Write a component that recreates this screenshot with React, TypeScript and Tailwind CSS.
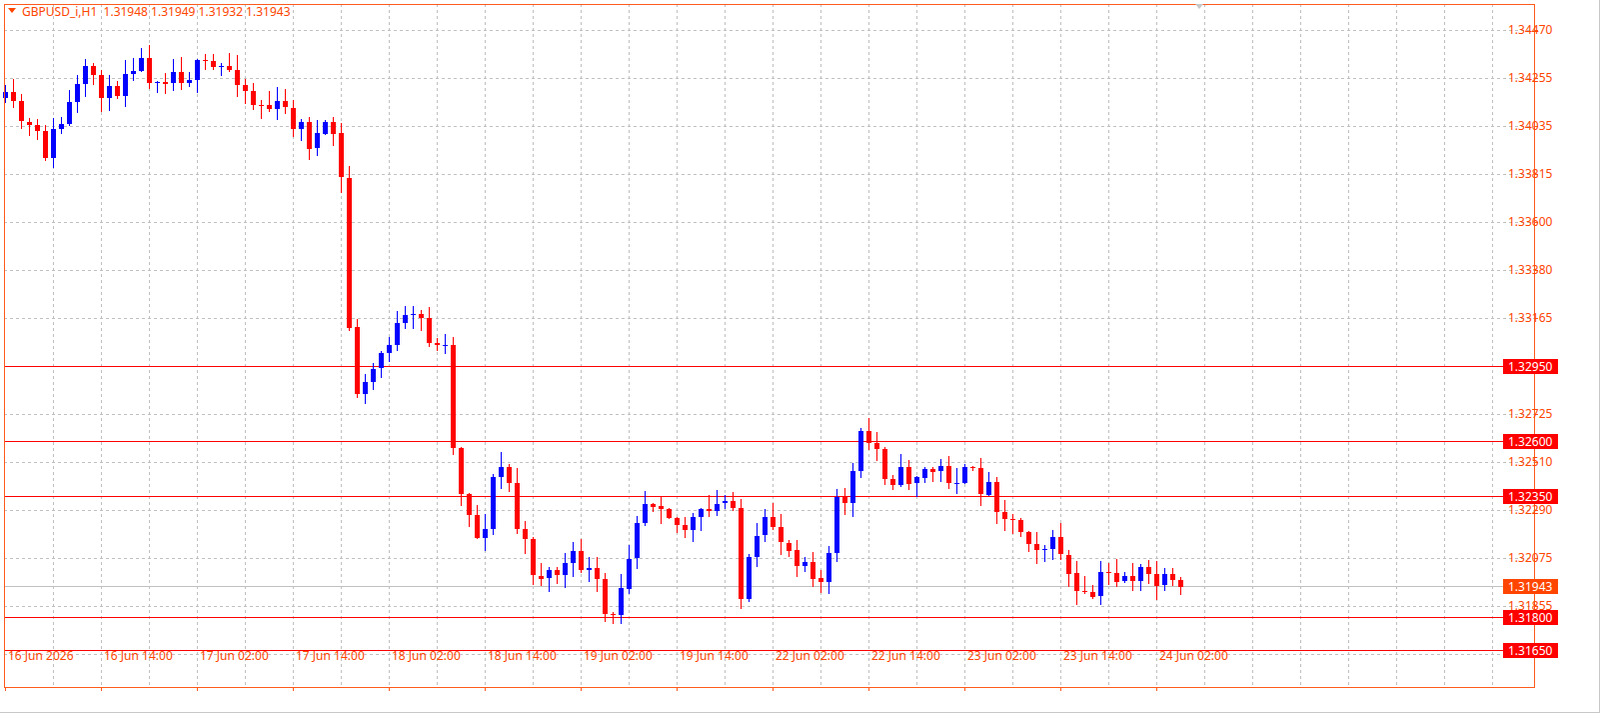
import React from "react";

const W = 1531;
const H = 683;
const pts: [number, number][] = [[5,105],[20,120],[45,150],[60,125],[75,95],[90,70],[110,100],[130,55],[150,72],[200,72],[235,68],[250,100],[290,115],[310,140],[338,130],[346,270],[352,385],[362,395],[375,365],[390,335],[410,322],[425,320],[435,355],[447,330],[454,470],[470,510],[480,550],[490,490],[505,460],[515,520],[530,565],[545,575],[560,570],[580,560],[600,595],[610,640],[620,585],[640,500],[660,495],[680,530],[700,520],[735,495],[742,615],[750,560],[770,520],[790,550],[810,560],[825,590],[835,510],[850,490],[860,440],[875,445],[885,470],[900,478],[930,470],[970,478],[990,488],[1010,520],[1030,535],[1050,550],[1060,545],[1070,580],[1080,605],[1090,600],[1105,575],[1130,575],[1150,578],[1170,590],[1181,587]];

function interp(x: number) {
  for (let i = 0; i < pts.length - 1; i++) {
    const [x0, y0] = pts[i], [x1, y1] = pts[i + 1];
    if (x >= x0 && x <= x1) return y0 + ((y1 - y0) * (x - x0)) / (x1 - x0 || 1);
  }
  return pts[pts.length - 1][1];
}
let seed = 11;
const rnd = () => { seed = (seed * 16807) % 2147483647; return seed / 2147483647; };

const candles: { x: number; o: number; c: number; h: number; l: number }[] = [];
let prev = 100;
for (let i = 0; i <= 147; i++) {
  const x = 5 + 8 * i;
  const c = i === 147 ? 587 : interp(x) + (rnd() - 0.5) * 26;
  const o = i === 0 ? 98 : prev;
  const h = Math.min(o, c) - rnd() * 14 - 1;
  const l = Math.max(o, c) + rnd() * 14 + 1;
  candles.push({ x, o, c, h, l });
  prev = c;
}

const priceLabels = [
  [30, "1.34470"],[78, "1.34255"],[126, "1.34035"],[174, "1.33815"],[222, "1.33600"],[270, "1.33380"],[318, "1.33165"],[414, "1.32725"],[462, "1.32510"],[510, "1.32290"],[558, "1.32075"],[606, "1.31855"],
] as const;
const hLines = [
  [366, "1.32950"],[441, "1.32600"],[496, "1.32350"],[617, "1.31800"],[650, "1.31650"],
] as const;
const timeLabels = ["16 Jun 2026","16 Jun 14:00","17 Jun 02:00","17 Jun 14:00","18 Jun 02:00","18 Jun 14:00","19 Jun 02:00","19 Jun 14:00","22 Jun 02:00","22 Jun 14:00","23 Jun 02:00","23 Jun 14:00","24 Jun 02:00"];

export default function App() {
  const vx: number[] = [];
  for (let x = 5 + 48; x < 1535; x += 48) vx.push(x);
  const hy: number[] = [];
  for (let y = 30; y < 687; y += 48) hy.push(y);
  return (
    <div className="relative w-[1601px] h-[713px] bg-white overflow-hidden border-r border-b border-[#c8c8c8] font-['Tahoma','DejaVu_Sans',sans-serif]">
      <svg className="absolute left-0 top-0" width={1601} height={713}>
        {vx.map((x) => (
          <line key={"v" + x} x1={x + 0.5} y1={4} x2={x + 0.5} y2={687} stroke="#c0c0c0" strokeDasharray="3 3" />
        ))}
        {hy.map((y) => (
          <line key={"h" + y} x1={4} y1={y + 0.5} x2={1535} y2={y + 0.5} stroke="#c0c0c0" strokeDasharray="3 3" />
        ))}
        {hLines.map(([y]) => (
          <line key={"r" + y} x1={4} y1={y + 0.5} x2={1535} y2={y + 0.5} stroke="#ff0000" />
        ))}
        <line x1={4} y1={586.5} x2={1535} y2={586.5} stroke="#c0c0c0" />
        {candles.map((k, i) => {
          const bull = k.c < k.o;
          const col = bull ? "#0000ff" : "#ff0000";
          const top = Math.round(Math.min(k.o, k.c));
          const bh = Math.max(1, Math.round(Math.abs(k.o - k.c)));
          return (
            <g key={i}>
              <line x1={k.x + 0.5} y1={Math.round(k.h)} x2={k.x + 0.5} y2={Math.round(k.l)} stroke={col} />
              <rect x={k.x - 2} y={top} width={5} height={bh} fill={col} />
            </g>
          );
        })}
        <rect x={4.5} y={4.5} width={W} height={H} fill="none" stroke="#ff5a1e" />
        {hy.map((y) => (
          <line key={"t" + y} x1={1535} y1={y + 0.5} x2={1539} y2={y + 0.5} stroke="#ff5a1e" />
        ))}
        {timeLabels.map((_, i) => (
          <line key={"b" + i} x1={5 + 96 * i + 0.5} y1={687} x2={5 + 96 * i + 0.5} y2={691} stroke="#ff5a1e" />
        ))}
        <path d="M1196 4 L1204 4 L1200 9 Z" fill="#c8c8c8" />
        <path d="M8 8 L16 8 L12 13 Z" fill="#ff4500" />
      </svg>
      <div className="absolute left-[22px] top-[5px] text-[12px] leading-[14px] text-[#ff4500] whitespace-pre">GBPUSD_i,H1  1.31948 1.31949 1.31932 1.31943</div>
      {priceLabels.map(([y, t]) => (
        <div key={t} className="absolute left-[1509px] text-[12px] leading-[14px] text-[#ff4500]" style={{ top: y - 7 }}>{t}</div>
      ))}
      {hLines.map(([y, t]) => (
        <div key={t} className="absolute left-[1504px] w-[55px] h-[15px] bg-[#ff0000] text-white text-[12px] leading-[15px] pl-[5px]" style={{ top: y - 7 }}>{t}</div>
      ))}
      <div className="absolute left-[1504px] top-[579px] w-[55px] h-[15px] bg-[#ff4500] text-white text-[12px] leading-[15px] pl-[5px]">1.31943</div>
      <div className="absolute left-[8px] top-[649px] flex">
        {timeLabels.map((t) => (
          <div key={t} className="w-[96px] text-[12px] leading-[14px] text-[#ff4500] whitespace-nowrap">{t}</div>
        ))}
      </div>
    </div>
  );
}
